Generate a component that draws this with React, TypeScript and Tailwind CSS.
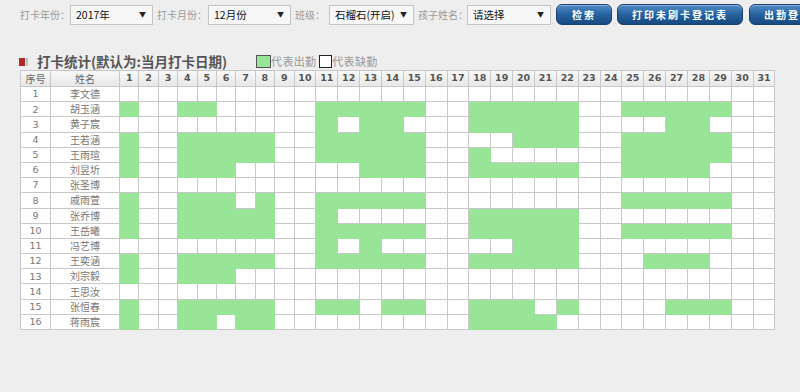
import React from 'react';

const names = [
  '李文德', '胡玉涵', '黄子宸', '王若涵', '王雨瑄', '刘昱圻', '张圣博', '戚雨萱',
  '张乔博', '王岳曦', '冯艺博', '王奕涵', '刘宗毅', '王思汝', '张恒春', '蒋雨宸',
];

// days with a punch record, one list per child
const attendance: number[][] = [
  [],
  [1, 4, 5, 11, 12, 13, 14, 15, 18, 19, 20, 21, 22, 25, 26, 27, 28, 29],
  [11, 13, 14, 18, 19, 20, 21, 22, 27, 28],
  [1, 4, 5, 6, 7, 8, 11, 12, 13, 14, 15, 20, 21, 22, 25, 26, 27, 28, 29],
  [1, 4, 5, 6, 7, 8, 11, 12, 13, 14, 15, 18, 25, 26, 27, 28, 29],
  [1, 4, 5, 6, 13, 14, 15, 18, 19, 20, 21, 22, 25, 26, 27, 28],
  [],
  [1, 4, 5, 6, 8, 11, 12, 13, 14, 15, 25, 26, 27, 28, 29],
  [1, 4, 5, 6, 7, 8, 11, 18, 19, 20, 21, 22],
  [1, 4, 5, 6, 7, 8, 11, 12, 13, 14, 15, 18, 19, 20, 21, 22, 25, 26, 27, 28, 29],
  [11, 13, 20, 21, 22],
  [1, 4, 5, 6, 7, 8, 11, 12, 13, 14, 15, 18, 19, 20, 21, 22, 26, 27, 28],
  [1, 4, 5, 6],
  [],
  [1, 4, 5, 6, 7, 8, 11, 12, 14, 15, 18, 19, 20, 22, 27, 28, 29],
  [1, 4, 5, 7, 8, 18, 19, 20, 21],
];

const days = Array.from({ length: 31 }, (_, i) => i + 1);

const FakeSelect: React.FC<{ value: string; width: string }> = ({ value, width }) => (
  <div
    className={`${width} shrink-0 h-[20px] flex items-center justify-between pl-[5px] pr-[6px] border border-[#c4c4c4] bg-[#f7f7f7] text-[10.5px] text-[#111]`}
  >
    <span>{value}</span>
    <span className="text-[7px] text-[#222]">▼</span>
  </div>
);

const Label: React.FC<{ text: string; width: string }> = ({ text, width }) => (
  <span className={`${width} shrink-0 text-[10px] text-[#9a9a9a] whitespace-nowrap`}>{text}</span>
);

const NavButton: React.FC<{ text: string; width: string }> = ({ text, width }) => (
  <button
    className={`${width} shrink-0 h-[21px] rounded-[6px] border border-[#17406e] bg-linear-to-b from-[#4f8cc6] via-[#2762a0] to-[#174a80] shadow-[inset_0_1px_0_rgba(255,255,255,0.35)] text-white text-[10px] font-bold tracking-[2px]`}
  >
    {text}
  </button>
);

const App: React.FC = () => {
  return (
    <div className="w-[800px] h-[392px] overflow-hidden bg-[#eeeeee] font-['Noto_Sans_CJK_SC',sans-serif]">
      {/* filter bar */}
      <div className="flex items-center pl-[20px] pt-[4px] h-[25px] whitespace-nowrap">
        <Label text="打卡年份：" width="w-[50px]" />
        <FakeSelect value="2017年" width="w-[83px]" />
        <Label text="打卡月份：" width="w-[51px] ml-[4px]" />
        <FakeSelect value="12月份" width="w-[83px]" />
        <Label text="班级：" width="w-[34px] ml-[4px]" />
        <FakeSelect value="石榴石(开启)" width="w-[85px]" />
        <Label text="孩子姓名：" width="w-[49px] ml-[4px]" />
        <FakeSelect value="请选择" width="w-[84px]" />
        <div className="flex shrink-0 gap-[5px] ml-[5px]">
          <NavButton text="检索" width="w-[56px]" />
          <NavButton text="打印未刷卡登记表" width="w-[126px]" />
          <NavButton text="出勤登记表" width="w-[90px] ml-[1px]" />
        </div>
      </div>

      {/* section title + legend */}
      <div className="flex items-center pl-[19px] mt-[28px] h-[17px]">
        <span className="w-[6px] h-[8px] bg-[#b5262a]" />
        <span className="w-[2px] h-[8px] bg-[#bdbdbd] ml-[1px]" />
        <span className="ml-[9px] text-[13.5px] font-bold text-[#555] leading-none">
          打卡统计(默认为:当月打卡日期)
        </span>
        <span className="ml-[29px] w-[15px] h-[13px] border border-[#555] bg-[#98e598]" />
        <span className="text-[11px] text-[#999] tracking-[0.3px]">代表出勤</span>
        <span className="ml-[3px] w-[13px] h-[13px] border border-[#222] bg-white" />
        <span className="text-[11px] text-[#999] tracking-[0.3px]">代表缺勤</span>
      </div>

      {/* attendance grid */}
      <table className="ml-[20px] table-fixed w-[755px] border-collapse text-[10px]">
        <thead>
          <tr className="h-[16px] bg-linear-to-b from-[#f8f8f8] to-[#e7e7e7]">
            <th className="w-[30px] border border-[#c8c8c8] font-normal text-[#666] p-0">序号</th>
            <th className="w-[69px] border border-[#c8c8c8] font-normal text-[#666] p-0">姓名</th>
            {days.map((d) => (
              <th
                key={d}
                className={`${d < 10 ? 'w-[19.4px]' : 'w-[21.86px]'} border border-[#c8c8c8] p-0 font-bold text-[#555] font-['DejaVu_Sans',sans-serif] text-[9.5px]`}
              >
                {d}
              </th>
            ))}
          </tr>
        </thead>
        <tbody>
          {names.map((name, i) => (
            <tr key={name} className="h-[15.2px]">
              <td className="border border-[#c8c8c8] bg-white text-center text-[#777] p-0 leading-none font-['DejaVu_Sans',sans-serif] text-[9.5px]">
                {i + 1}
              </td>
              <td className="border border-[#c8c8c8] bg-white text-center text-[#777] p-0 leading-none">
                {name}
              </td>
              {days.map((d) =>
                attendance[i].includes(d) ? (
                  <td key={d} className="border border-[#98e598] bg-[#98e598] p-0" />
                ) : (
                  <td key={d} className="border border-[#c8c8c8] bg-white p-0" />
                ),
              )}
            </tr>
          ))}
        </tbody>
      </table>
    </div>
  );
};

export default App;
